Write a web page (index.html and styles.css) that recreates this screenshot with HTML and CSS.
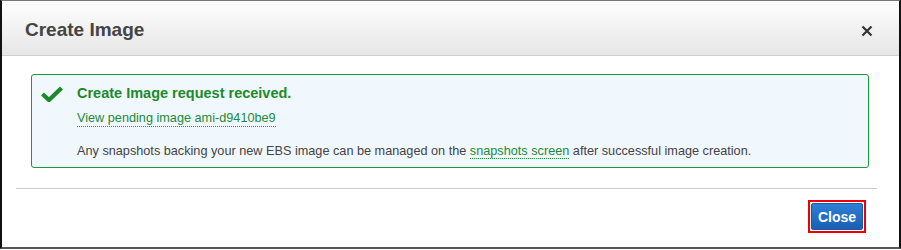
FILE: index.html
```html
<!DOCTYPE html>
<html>
<head>
<meta charset="utf-8">
<link rel="stylesheet" href="styles.css">
</head>
<body>
<div class="modal">
  <div class="header">
    <h1 class="title">Create Image</h1>
    <span class="close-x">
      <svg width="12" height="12" viewBox="0 0 12 12"><path d="M1.5 1.5 L10.5 10.5 M10.5 1.5 L1.5 10.5" stroke="#333" stroke-width="2.2" stroke-linecap="butt"/></svg>
    </span>
  </div>
  <div class="body">
    <div class="alert">
      <svg class="check" width="22" height="16" viewBox="0 0 22 16"><path d="M1.5 8 L8 14 L20.5 2" fill="none" stroke="#1d8a2a" stroke-width="4.2"/></svg>
      <div class="alert-content">
        <div class="alert-title">Create Image request received.</div>
        <a class="link" href="#">View pending image ami-d9410be9</a>
        <p class="alert-text">Any snapshots backing your new EBS image can be managed on the <a class="link" href="#">snapshots screen</a> after successful image creation.</p>
      </div>
    </div>
  </div>
  <div class="footer">
    <div class="btn-wrap"><button class="btn">Close</button></div>
  </div>
</div>
</body>
</html>
```
FILE: styles.css
```css
html, body { margin: 0; padding: 0; background: #fff; }
body { font-family: "Liberation Sans", Arial, sans-serif; color: #444; }
.modal {
  width: 897px;
  height: 246px;
  border-top: 1px solid #777;
  border-left: 2px solid #111;
  border-right: 2px solid #111;
  border-bottom: 2px solid #555;
  display: flex;
  flex-direction: column;
  box-sizing: content-box;
}
.header {
  height: 54px;
  background: linear-gradient(#fefefe, #e6e6e6);
  border-bottom: 1px solid #cfcfcf;
  display: flex;
  align-items: center;
  justify-content: space-between;
  padding: 0 26px 0 23px;
}
.title {
  margin: 0;
  font-size: 19px;
  font-weight: bold;
  color: #444;
  padding-top: 4px;
}
.close-x { display: flex; padding-top: 5px; }
.body { padding: 18px 30px 0 29px; }
.alert {
  height: 94px;
  box-sizing: border-box;
  border: 1px solid #1d9a3a;
  border-radius: 3px;
  background: #f0f7fd;
  display: flex;
  padding: 9px 10px 0 9px;
}
.check { flex: none; margin-top: 2px; margin-right: 14px; }
.alert-content { display: flex; flex-direction: column; align-items: flex-start; }
.alert-title {
  font-size: 14.5px;
  font-weight: bold;
  color: #1d8a2a;
  line-height: 18px;
}
.link {
  color: #1d8a3a;
  text-decoration: none;
  border-bottom: 1px dotted #1d9a3a;
  font-size: 12.7px;
  line-height: 15px;
}
.alert-content > .link { margin-top: 9px; }
.alert-text {
  margin: 17px 0 0;
  font-size: 12.7px;
  line-height: 15px;
  color: #444;
}
.footer {
  margin: 20px 22px 0 14px;
  border-top: 1px solid #ccc;
  display: flex;
  justify-content: flex-end;
  padding-top: 11px;
  padding-right: 11px;
}
.btn-wrap {
  border: 2px solid #ee0000;
  padding: 1px;
  display: flex;
}
.btn {
  font-family: "Liberation Sans", Arial, sans-serif;
  font-size: 14px;
  font-weight: bold;
  color: #fff;
  background: linear-gradient(#2e7fd6, #1a5fb4);
  border: 1px solid #1b5aa6;
  border-radius: 2px;
  width: 52px;
  height: 27px;
  padding: 0;
}
```
